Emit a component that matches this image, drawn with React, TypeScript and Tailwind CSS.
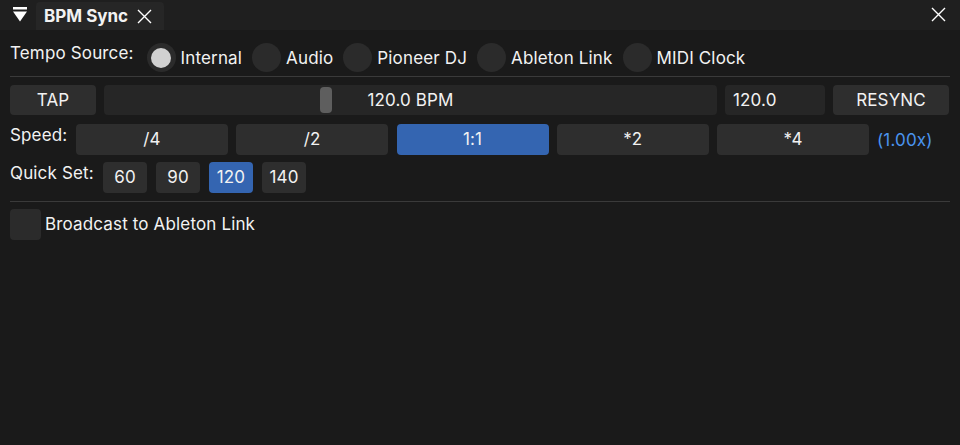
import { useState } from 'react';

const sources = ['Internal', 'Audio', 'Pioneer DJ', 'Ableton Link', 'MIDI Clock'];
const speeds = ['/4', '/2', '1:1', '*2', '*4'];
const quick = [60, 90, 120, 140];

export default function App() {
  const [source, setSource] = useState('Internal');
  const [speed, setSpeed] = useState('1:1');
  const [bpm, setBpm] = useState(120);
  const [broadcast, setBroadcast] = useState(false);

  return (
    <main className="w-[960px] h-[445px] bg-[#1a1a1a] text-[#f2f2f2] text-[17px] tracking-[0.15px] leading-none overflow-hidden" style={{ fontFamily: 'Inter, "Noto Sans", sans-serif' }}>
      {/* TITLE BAR */}
      <div className="h-[30px] bg-[#1f1f1f] flex items-end pl-[12px] pr-[14px]">
        <svg width="16" height="16" viewBox="0 0 16 16" className="mb-[7px] fill-white">
          <rect x="1" y="0" width="14" height="2.5" />
          <polygon points="1,4.5 15,4.5 8,14.5" />
        </svg>
        <div className="ml-[8px] h-[28px] w-[128px] bg-[#262626] rounded-t-[4px] flex items-center pl-[8px] gap-[9px]">
          <span className="font-bold text-[17px] tracking-normal">BPM Sync</span>
          <svg width="15" height="15" viewBox="0 0 15 15" className="stroke-white" strokeWidth="1.4">
            <path d="M1 1 L14 14 M14 1 L1 14" />
          </svg>
        </div>
        <svg width="15" height="15" viewBox="0 0 15 15" className="ml-auto mb-[8px] stroke-white" strokeWidth="1.4">
          <path d="M1 1 L14 14 M14 1 L1 14" />
        </svg>
      </div>

      <div className="px-[10px] pt-[13px]">
        {/* TEMPO SOURCE */}
        <div className="flex items-start h-[29px]">
          <span className="mt-[2px] mr-[13px]">Tempo Source:</span>
          {sources.map(s => (
            <button key={s} onClick={() => setSource(s)} className="flex items-center mr-[10px]">
              <span className="w-[29px] h-[29px] rounded-full bg-[#2b2b2b] flex items-center justify-center">
                {source === s && <span className="w-[20px] h-[20px] rounded-full bg-[#d1d1d1]" />}
              </span>
              <span className="ml-[5px] mt-[1px]">{s}</span>
            </button>
          ))}
        </div>

        <div className="h-px bg-[#3a3a3a] mt-[4px] mb-[8px]" />

        {/* TAP / SLIDER */}
        <div className="flex gap-[8px] h-[30px]">
          <button className="w-[86px] bg-[#2e2e2e] rounded-[4px]">TAP</button>
          <div className="w-[613px] bg-[#262626] rounded-[4px] relative flex items-center justify-center">
            <div className="absolute left-[216px] top-[2px] w-[12px] h-[26px] rounded-[4px] bg-[#5e5e5e]" />
            <span>{bpm.toFixed(1)} BPM</span>
          </div>
          <div className="w-[100px] bg-[#262626] rounded-[4px] flex items-center pl-[8px]">{bpm.toFixed(1)}</div>
          <button onClick={() => setBpm(120)} className="w-[116px] bg-[#2e2e2e] rounded-[4px]">RESYNC</button>
        </div>

        {/* SPEED */}
        <div className="flex items-start mt-[9px] h-[31px]">
          <span className="w-[66px] mt-[3px]">Speed:</span>
          <div className="flex gap-[8.25px]">
            {speeds.map(s => (
              <button key={s} onClick={() => setSpeed(s)} className={`w-[152px] h-[31px] rounded-[4px] ${speed === s ? 'bg-[#3465b1]' : 'bg-[#2e2e2e]'}`}>{s}</button>
            ))}
          </div>
          <span className="ml-[8px] mt-[8px] text-[#4a94ee]">(1.00x)</span>
        </div>

        {/* QUICK SET */}
        <div className="flex items-start mt-[7px] h-[31px]">
          <span className="w-[93px] mt-[3px]">Quick Set:</span>
          <div className="flex gap-[9px]">
            {quick.map(q => (
              <button key={q} onClick={() => setBpm(q)} className={`w-[44px] h-[31px] rounded-[4px] ${bpm === q ? 'bg-[#3465b1]' : 'bg-[#2e2e2e]'}`}>{q}</button>
            ))}
          </div>
        </div>

        <div className="h-px bg-[#3a3a3a] mt-[8px] mb-[7px]" />

        {/* BROADCAST */}
        <button onClick={() => setBroadcast(!broadcast)} className="flex items-center gap-[4px]">
          <span className="w-[31px] h-[31px] rounded-[4px] bg-[#2b2b2b] flex items-center justify-center">
            {broadcast && <span className="text-white">✓</span>}
          </span>
          <span>Broadcast to Ableton Link</span>
        </button>
      </div>
    </main>
  );
}
